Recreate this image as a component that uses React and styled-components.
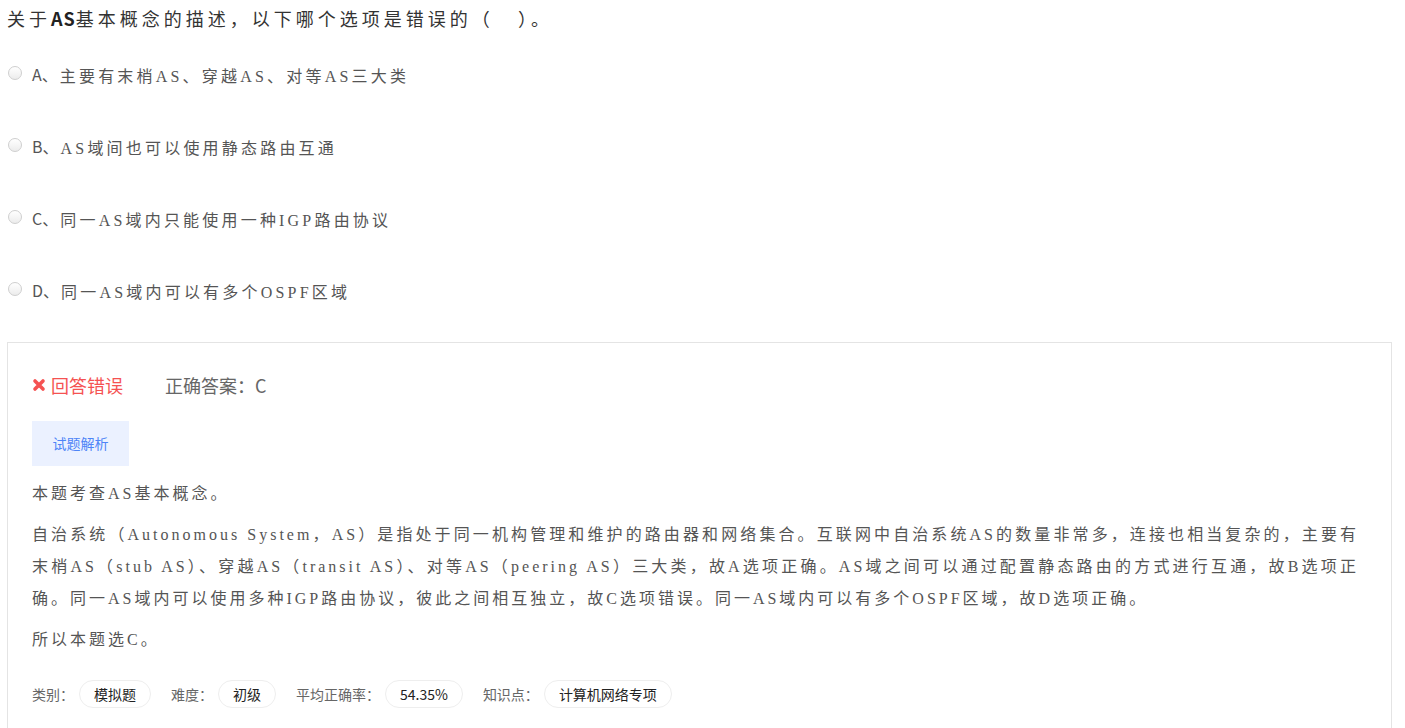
import React from "react"
import styled, { createGlobalStyle } from "styled-components"

const GlobalStyle = createGlobalStyle`
  body {
    margin: 0;
    background: #fff;
    font-family: "Noto Sans CJK SC", "Liberation Sans", sans-serif;
  }
`

const options = [
  { key: "A", text: "主要有末梢AS、穿越AS、对等AS三大类" },
  { key: "B", text: "AS域间也可以使用静态路由互通" },
  { key: "C", text: "同一AS域内只能使用一种IGP路由协议" },
  { key: "D", text: "同一AS域内可以有多个OSPF区域" },
]

// the long paragraph is kept on the same line breaks as the original page
const analysis = [
  ["本题考查AS基本概念。"],
  [
    "自治系统（Autonomous System，AS）是指处于同一机构管理和维护的路由器和网络集合。互联网中自治系统AS的数量非常多，连接也相当复杂的，主要有",
    "末梢AS（stub AS）、穿越AS（transit AS）、对等AS（peering AS）三大类，故A选项正确。AS域之间可以通过配置静态路由的方式进行互通，故B选项正",
    "确。同一AS域内可以使用多种IGP路由协议，彼此之间相互独立，故C选项错误。同一AS域内可以有多个OSPF区域，故D选项正确。",
  ],
  ["所以本题选C。"],
]

const meta = [
  { label: "类别：", value: "模拟题" },
  { label: "难度：", value: "初级" },
  { label: "平均正确率：", value: "54.35%" },
  { label: "知识点：", value: "计算机网络专项" },
]

const App = () => {
  return (
    <Page>
      <GlobalStyle />
      <Question>
        关于<strong>AS</strong>基本概念的描述，以下哪个选项是错误的（{"\u00a0\u00a0\u00a0"}）。
      </Question>
      <OptionList>
        {options.map(o => (
          <Option key={o.key}>
            <Radio />
            <OptionKey>{o.key}、</OptionKey>
            <OptionText>{o.text}</OptionText>
          </Option>
        ))}
      </OptionList>
      <ResultPanel>
        <Status>
          <Wrong>
            <svg width="14" height="14" viewBox="0 0 14 14">
              <path
                d="M3 3 L11 11 M11 3 L3 11"
                stroke="#f55252"
                strokeWidth="3.6"
                strokeLinecap="round"
              />
            </svg>
            回答错误
          </Wrong>
          <Answer>正确答案：C</Answer>
        </Status>
        <TabButton>试题解析</TabButton>
        <Analysis>
          {analysis.map((lines, i) => (
            <Paragraph key={i}>
              {lines.map((line, j) => (
                <Line key={j} $last={j === lines.length - 1}>
                  {line}
                </Line>
              ))}
            </Paragraph>
          ))}
        </Analysis>
        <MetaRow>
          {meta.map(m => (
            <MetaItem key={m.label}>
              <MetaLabel>{m.label}</MetaLabel>
              <Chip>{m.value}</Chip>
            </MetaItem>
          ))}
        </MetaRow>
      </ResultPanel>
    </Page>
  )
}

const Page = styled.div`
  padding: 0 7px;
  width: 1385px;
`

const Question = styled.div`
  font-size: 18px;
  line-height: 36px;
  letter-spacing: 4px;
  color: #333;
  font-family: "Noto Sans CJK SC", sans-serif;
  strong {
    font-weight: 600;
    letter-spacing: 1px;
    color: #222;
  }
`

const OptionList = styled.div`
  margin-top: 3px;
`

const Option = styled.div`
  display: flex;
  align-items: center;
  height: 72px;
  padding-left: 1px;
`

const Radio = styled.span`
  width: 12px;
  height: 12px;
  border-radius: 50%;
  border: 1px solid #cfcfcf;
  background: linear-gradient(#fff, #ececec);
  margin-top: -5px;
  margin-right: 10px;
`

const OptionKey = styled.span`
  font-family: "Noto Sans CJK SC", sans-serif;
  font-size: 16px;
  color: #555;
  margin-top: -2px;
`

const OptionText = styled.span`
  font-family: "Liberation Serif", "Noto Sans CJK SC", serif;
  font-size: 16px;
  letter-spacing: 3.2px;
  color: #555;
  margin-left: 2px;
`

const ResultPanel = styled.div`
  margin-top: 15px;
  border: 1px solid #e4e4e4;
  border-bottom: none;
  padding: 30px 32px 20px 24px;
`

const Status = styled.div`
  display: flex;
  align-items: center;
  font-size: 18px;
  line-height: 24px;
`

const Wrong = styled.span`
  display: flex;
  align-items: center;
  gap: 5px;
  color: #f55252;
  width: 133px;
`

const Answer = styled.span`
  color: #666;
`

const TabButton = styled.div`
  margin-top: 24px;
  width: 97px;
  height: 45px;
  line-height: 45px;
  text-align: center;
  background: #ebf1ff;
  color: #4d84f7;
  font-size: 14px;
`

const Analysis = styled.div`
  margin-top: 12px;
  font-family: "Liberation Serif", "Noto Sans CJK SC", serif;
  font-size: 16px;
  line-height: 32px;
  letter-spacing: 3px;
  color: #555;
`

const Paragraph = styled.p`
  margin: 0 0 9px;
`

const Line = styled.span`
  display: block;
  text-align: justify;
  text-align-last: ${props => (props.$last ? "left" : "justify")};
`

const MetaRow = styled.div`
  display: flex;
  align-items: center;
  gap: 20px;
  margin-top: 24px;
`

const MetaItem = styled.div`
  display: flex;
  align-items: center;
  gap: 5px;
`

const MetaLabel = styled.span`
  font-size: 14px;
  color: #666;
`

const Chip = styled.span`
  height: 26px;
  line-height: 26px;
  padding: 0 14px;
  border: 1px solid #eee;
  border-radius: 14px;
  font-size: 14px;
  color: #222;
`

export default App
